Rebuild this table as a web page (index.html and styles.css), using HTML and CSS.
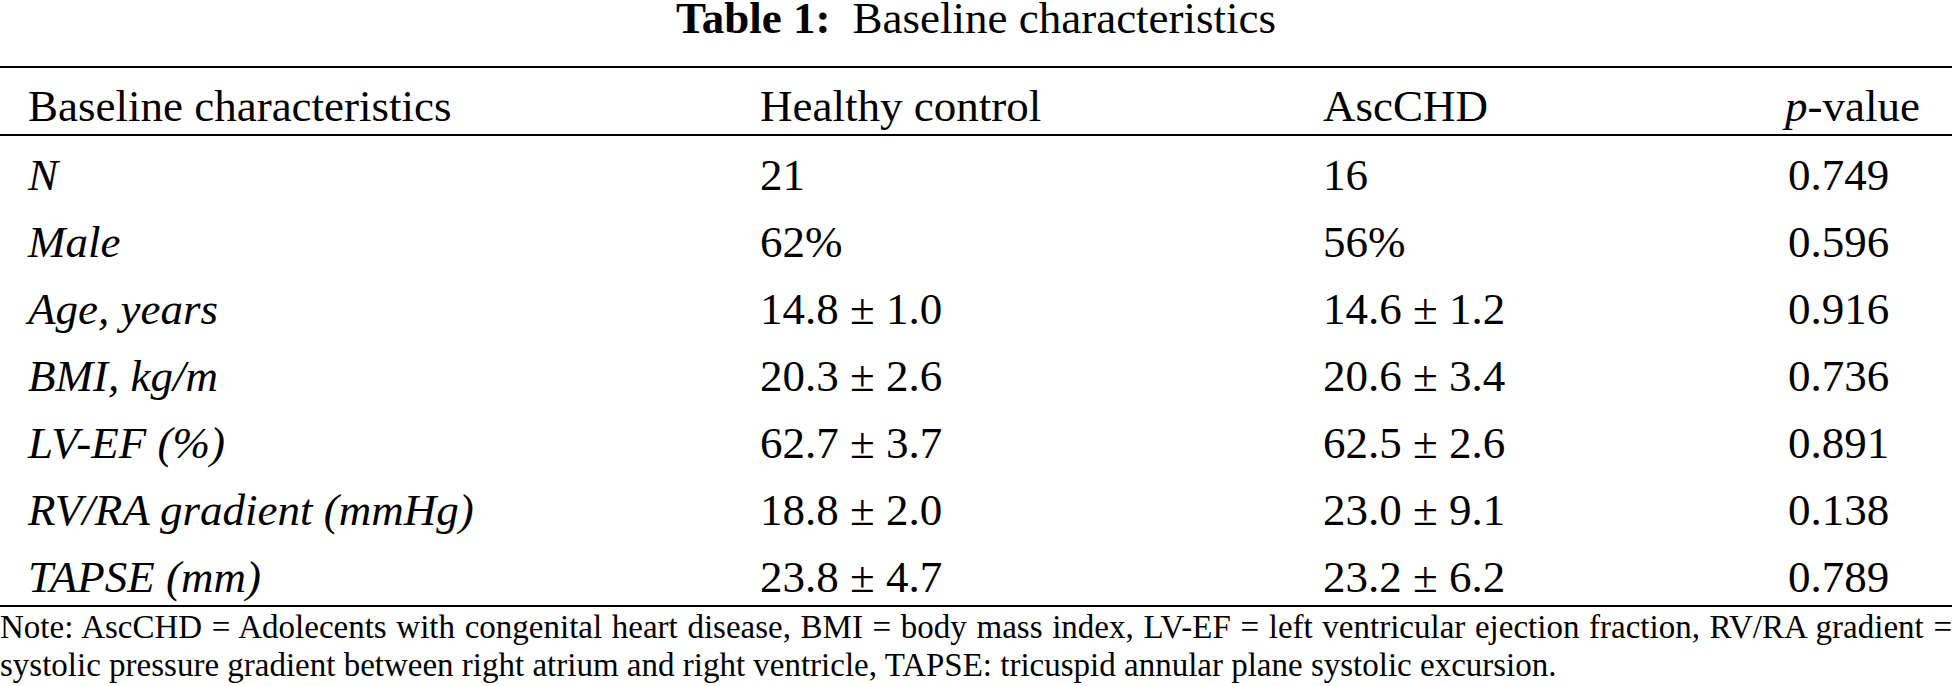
FILE: index.html
```html
<!DOCTYPE html>
<html lang="en">
<head>
<meta charset="utf-8">
<title>Table 1: Baseline characteristics</title>
<link rel="stylesheet" href="styles.css">
</head>
<body>
<div class="page">
  <h1 class="caption"><span class="label">Table 1:</span><span class="caption-text">Baseline characteristics</span></h1>
  <table class="data">
    <colgroup>
      <col class="c1"><col class="c2"><col class="c3"><col class="c4">
    </colgroup>
    <thead>
      <tr>
        <th class="first">Baseline characteristics</th>
        <th>Healthy control</th>
        <th>AscCHD</th>
        <th><i>p</i>-value</th>
      </tr>
    </thead>
    <tbody>
      <tr><td class="first">N</td><td>21</td><td>16</td><td class="pval">0.749</td></tr>
      <tr><td class="first">Male</td><td>62%</td><td>56%</td><td class="pval">0.596</td></tr>
      <tr><td class="first">Age, years</td><td>14.8 ± 1.0</td><td>14.6 ± 1.2</td><td class="pval">0.916</td></tr>
      <tr><td class="first">BMI, kg/m</td><td>20.3 ± 2.6</td><td>20.6 ± 3.4</td><td class="pval">0.736</td></tr>
      <tr><td class="first">LV-EF (%)</td><td>62.7 ± 3.7</td><td>62.5 ± 2.6</td><td class="pval">0.891</td></tr>
      <tr><td class="first">RV/RA gradient (mmHg)</td><td>18.8 ± 2.0</td><td>23.0 ± 9.1</td><td class="pval">0.138</td></tr>
      <tr><td class="first">TAPSE (mm)</td><td>23.8 ± 4.7</td><td>23.2 ± 6.2</td><td class="pval">0.789</td></tr>
    </tbody>
  </table>
  <p class="note">Note: AscCHD = Adolecents with congenital heart disease, BMI = body mass index, LV-EF = left ventricular ejection fraction, RV/RA gradient = systolic pressure gradient between right atrium and right ventricle, TAPSE: tricuspid annular plane systolic excursion.</p>
</div>
</body>
</html>
```

FILE: styles.css
```css
html, body {
  margin: 0;
  padding: 0;
  background: #ffffff;
}

.page {
  width: 1952px;
  font-family: "Liberation Serif", "Times New Roman", serif;
  color: #000000;
}

.caption {
  margin: 0 0 30px 0;
  font-size: 45px;
  line-height: 36px;
  font-weight: normal;
  text-align: center;
}

.caption .label {
  font-weight: bold;
  margin-right: 22px;
}

.data {
  width: 1952px;
  table-layout: fixed;
  border-collapse: collapse;
  border-top: 2px solid #000;
  border-bottom: 2px solid #000;
  font-size: 45px;
  line-height: 45px;
}

.data col.c1 { width: 760px; }
.data col.c2 { width: 563px; }
.data col.c3 { width: 462px; }
.data col.c4 { width: 167px; }

.data thead tr {
  border-bottom: 2px solid #000;
}

.data th {
  font-weight: normal;
  text-align: left;
  padding: 16px 0 5px 0;
  white-space: nowrap;
}

.data td {
  text-align: left;
  padding: 17px 0 5px 0;
  white-space: nowrap;
}

.data .first {
  padding-left: 28px;
}

.data td.first {
  font-style: italic;
}

.data td.pval {
  padding-left: 3px;
}

.note {
  margin: 1px 0 0 0;
  font-size: 33px;
  line-height: 38px;
  text-align: justify;
}
```
